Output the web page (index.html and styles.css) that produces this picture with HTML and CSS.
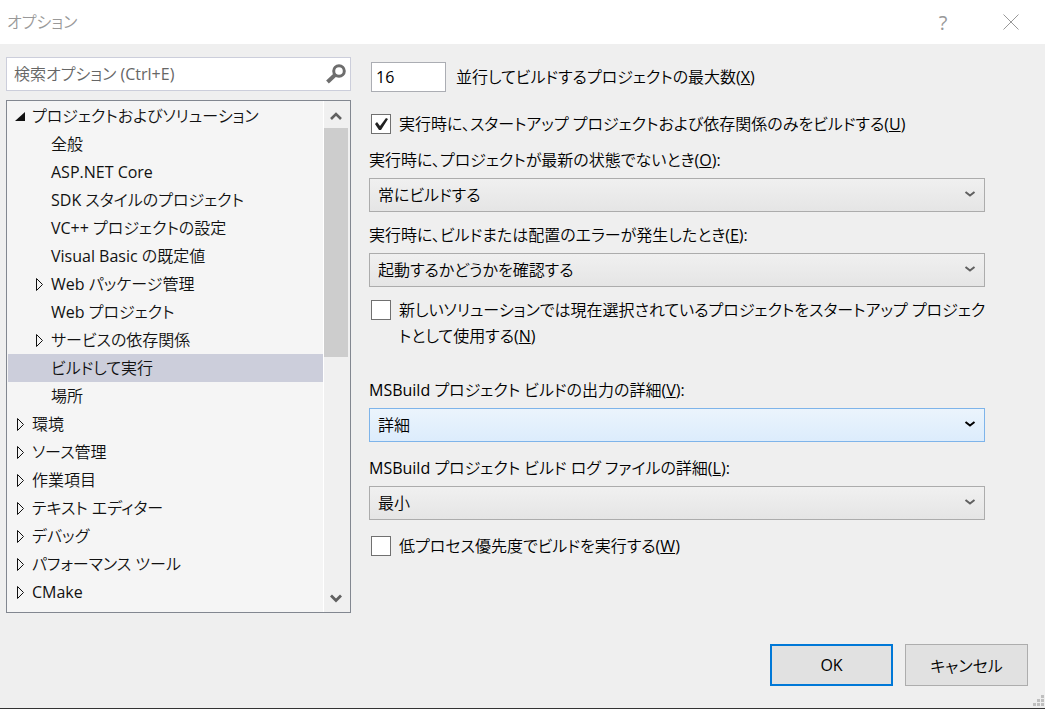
FILE: index.html
```html
<!DOCTYPE html>
<html lang="ja">
<head>
    <meta charset="UTF-8">
    <meta name="viewport" content="width=device-width, initial-scale=1.0">
    <title>オプション</title>
    <link rel="stylesheet" href="styles.css">
</head>
<body>

    <!-- Arrow shapes used by the tree and the drop-downs -->
    <svg class="symbols" width="0" height="0">
        <symbol id="closed" viewBox="0 0 9 15">
            <path d="M1.5 1.5 L7.5 7.5 L1.5 13.5 Z" fill="none" stroke="currentColor"/>
        </symbol>
        <symbol id="chevron" viewBox="0 0 12 8">
            <path d="M1.5 2 L6 5.5 L10.5 2" fill="none" stroke="currentColor" stroke-width="2"/>
        </symbol>
    </svg>

    <header class="title-bar">
        <h1>オプション</h1>
        <div class="window-buttons">
            <button type="button" class="help" aria-label="ヘルプ">?</button>
            <button type="button" aria-label="閉じる">
                <svg width="16" height="16" viewBox="0 0 16 16"><path d="M0.5 0.5 L15.5 15.5 M15.5 0.5 L0.5 15.5" stroke="currentColor"/></svg>
            </button>
        </div>
    </header>

    <main class="content">

        <!-- Search and category tree -->
        <div class="sidebar">
            <div class="search">
                <input type="search" placeholder="検索オプション (Ctrl+E)" aria-label="検索オプション">
                <svg width="20" height="20" viewBox="0 0 20 20" fill="none" stroke="#6d6d6d">
                    <circle cx="13" cy="7" r="5.3" stroke-width="3"/>
                    <path d="M9 11 L1.5 18" stroke-width="4"/>
                </svg>
            </div>

            <div class="tree-box">
                <ul class="tree">
                    <li><span class="row"><svg class="arrow" width="9" height="11" viewBox="0 0 9 11"><path d="M9 1 V10 H-1 Z" fill="currentColor"/></svg>プロジェクトおよびソリューション</span>
                        <ul>
                            <li><span class="row">全般</span></li>
                            <li><span class="row">ASP.NET Core</span></li>
                            <li><span class="row">SDK スタイルのプロジェクト</span></li>
                            <li><span class="row">VC++ プロジェクトの設定</span></li>
                            <li><span class="row">Visual Basic の既定値</span></li>
                            <li><span class="row"><svg class="arrow" width="9" height="15"><use href="#closed"/></svg>Web パッケージ管理</span></li>
                            <li><span class="row">Web プロジェクト</span></li>
                            <li><span class="row"><svg class="arrow" width="9" height="15"><use href="#closed"/></svg>サービスの依存関係</span></li>
                            <li><span class="row selected">ビルドして実行</span></li>
                            <li><span class="row">場所</span></li>
                        </ul>
                    </li>
                    <li><span class="row"><svg class="arrow" width="9" height="15"><use href="#closed"/></svg>環境</span></li>
                    <li><span class="row"><svg class="arrow" width="9" height="15"><use href="#closed"/></svg>ソース管理</span></li>
                    <li><span class="row"><svg class="arrow" width="9" height="15"><use href="#closed"/></svg>作業項目</span></li>
                    <li><span class="row"><svg class="arrow" width="9" height="15"><use href="#closed"/></svg>テキスト エディター</span></li>
                    <li><span class="row"><svg class="arrow" width="9" height="15"><use href="#closed"/></svg>デバッグ</span></li>
                    <li><span class="row"><svg class="arrow" width="9" height="15"><use href="#closed"/></svg>パフォーマンス ツール</span></li>
                    <li><span class="row"><svg class="arrow" width="9" height="15"><use href="#closed"/></svg>CMake</span></li>
                </ul>
                <div class="scrollbar">
                    <button type="button" aria-label="上へ">
                        <svg width="12" height="10" viewBox="0 0 12 10"><path d="M1 9 L6 4 L11 9" fill="none" stroke="currentColor" stroke-width="2.6"/></svg>
                    </button>
                    <div class="track"><div class="thumb"></div></div>
                    <button type="button" aria-label="下へ">
                        <svg width="12" height="10" viewBox="0 0 12 10"><path d="M1 1.5 L6 6.5 L11 1.5" fill="none" stroke="currentColor" stroke-width="2.8"/></svg>
                    </button>
                </div>
            </div>
        </div>

        <!-- Build and run settings -->
        <form class="settings">
            <div class="number">
                <input type="text" id="max-builds" value="16">
                <label for="max-builds">並行してビルドするプロジェクトの最大数(<u>X</u>)</label>
            </div>

            <div class="group">
                <div class="check">
                    <input type="checkbox" id="only-startup" checked>
                    <label for="only-startup">実行時に、スタートアップ プロジェクトおよび依存関係のみをビルドする(<u>U</u>)</label>
                </div>
                <div class="field">
                    <label for="out-of-date">実行時に、プロジェクトが最新の状態でないとき(<u>O</u>):</label>
                    <div class="select">
                        <select id="out-of-date"><option>常にビルドする</option></select>
                        <svg width="12" height="8"><use href="#chevron"/></svg>
                    </div>
                </div>
                <div class="field">
                    <label for="on-error">実行時に、ビルドまたは配置のエラーが発生したとき(<u>E</u>):</label>
                    <div class="select">
                        <select id="on-error"><option>起動するかどうかを確認する</option></select>
                        <svg width="12" height="8"><use href="#chevron"/></svg>
                    </div>
                </div>
                <div class="check">
                    <input type="checkbox" id="new-solution">
                    <label for="new-solution">新しいソリューションでは現在選択されているプロジェクトをスタートアップ プロジェク<br>トとして使用する(<u>N</u>)</label>
                </div>
            </div>

            <div class="group msbuild">
                <div class="field">
                    <label for="output">MSBuild プロジェクト ビルドの出力の詳細(<u>V</u>):</label>
                    <div class="select active">
                        <select id="output"><option>詳細</option></select>
                        <svg width="12" height="8"><use href="#chevron"/></svg>
                    </div>
                </div>
                <div class="field">
                    <label for="log-file">MSBuild プロジェクト ビルド ログ ファイルの詳細(<u>L</u>):</label>
                    <div class="select">
                        <select id="log-file"><option>最小</option></select>
                        <svg width="12" height="8"><use href="#chevron"/></svg>
                    </div>
                </div>
                <div class="check">
                    <input type="checkbox" id="low-priority">
                    <label for="low-priority">低プロセス優先度でビルドを実行する(<u>W</u>)</label>
                </div>
            </div>
        </form>
    </main>

    <footer class="buttons">
        <button type="button" class="default">OK</button>
        <button type="button">キャンセル</button>
        <svg class="grip" width="11" height="11" viewBox="0 0 11 11" fill="#bfbfbf">
            <path d="M8 0h3v3h-3z M4 4h3v3h-3z M8 4h3v3h-3z M0 8h3v3h-3z M4 8h3v3h-3z M8 8h3v3h-3z"/>
        </svg>
    </footer>

</body>
</html>
```
FILE: styles.css
```css
* {
    margin: 0;
    padding: 0;
    box-sizing: border-box;
}

body, button, input, select {
    font-family: "Open Sans", "Noto Sans CJK JP DemiLight", "Noto Sans CJK JP Light", "Noto Sans CJK JP", sans-serif;
    font-size: 16px;
    font-feature-settings: "palt";
    color: #000;
}

body {
    display: flex;
    flex-direction: column;
    min-height: 100vh;
    line-height: 26px;
    background-color: #efefef;
    border-bottom: 1px solid #333;
}

.symbols {
    position: absolute;
}

/* Title bar */
.title-bar {
    display: flex;
    justify-content: space-between;
    align-items: center;
    height: 44px;
    padding-left: 7px;
    background-color: white;
    color: #999;
}

.title-bar h1 {
    font-size: 16px;
    font-weight: normal;
}

.window-buttons {
    display: flex;
}

.window-buttons button {
    display: flex;
    justify-content: center;
    align-items: center;
    width: 68px;
    height: 44px;
    border: none;
    background: none;
    color: #999;
}

.window-buttons .help {
    font-size: 20px;
}

/* Main area */
.content {
    display: grid;
    grid-template-columns: 345px 1fr;
    gap: 18px;
    flex: 1;
    align-items: start;
    padding: 13px 61px 0 6px;
}

/* Search box */
.search {
    display: flex;
    align-items: center;
    height: 34px;
    padding: 0 4px 0 7px;
    background-color: white;
    border: 1px solid #cccedb;
}

.search input {
    flex: 1;
    min-width: 0;
    border: none;
    outline: none;
    background: none;
}

.search input::placeholder {
    color: #666;
}

/* Category tree */
.tree-box {
    display: flex;
    margin-top: 9px;
    background-color: #f5f5f5;
    border: 1px solid #828790;
    color: #111;
}

.tree {
    flex: 1;
    padding: 1px 0 6px 1px;
}

.tree, .tree ul {
    list-style: none;
}

.row {
    display: flex;
    align-items: center;
    position: relative;
    height: 28px;
    padding-left: 24px;
}

.tree ul .row {
    padding-left: 43px;
}

.arrow {
    position: absolute;
    left: 8px;
    overflow: visible;
}

.tree ul .arrow {
    left: 27px;
}

.selected {
    background-color: #cccedb;
}

/* Scrollbar */
.scrollbar {
    display: flex;
    flex-direction: column;
    width: 27px;
    padding-right: 2px;
    background-color: #f0f0f0;
    border-left: 1px solid white;
}

.scrollbar button {
    display: flex;
    justify-content: center;
    align-items: center;
    height: 27px;
    border: none;
    background: none;
    color: #606060;
}

.track {
    flex: 1;
}

.thumb {
    height: 50%;
    background-color: #cdcdcd;
}

/* Settings */
.number {
    display: flex;
    align-items: center;
    gap: 10px;
    padding: 5px 0 0 2px;
}

.number input {
    width: 75px;
    height: 30px;
    padding-left: 4px;
    border: 1px solid #abadb3;
    background-color: white;
}

.group {
    display: flex;
    flex-direction: column;
    gap: 10px;
    margin-top: 19px;
}

.msbuild {
    gap: 13px;
    margin-top: 28px;
}

.check {
    display: flex;
    align-items: flex-start;
    gap: 8px;
    padding-left: 2px;
}

.check label {
    white-space: nowrap;
}

.check input {
    appearance: none;
    flex: none;
    width: 20px;
    height: 20px;
    margin-top: 3px;
    border: 1px solid #707070;
    background-color: white;
}

.check input:checked::before {
    content: "";
    display: block;
    width: 18px;
    height: 18px;
    background-color: #212121;
    clip-path: polygon(3px 9px, 5px 7px, 8px 11px, 14px 3px, 16px 4px, 9px 15px, 7px 15px);
}

.field label {
    display: block;
    margin-bottom: 5px;
}

.select {
    position: relative;
    color: #606060;
}

.select select {
    appearance: none;
    display: block;
    width: 100%;
    height: 34px;
    padding-left: 8px;
    border: 1px solid #acacac;
    border-radius: 0;
    background: linear-gradient(#f0f0f0, #e5e5e5);
}

.select svg {
    position: absolute;
    top: 12px;
    right: 9px;
    pointer-events: none;
}

.active {
    color: #000;
}

.active select {
    border-color: #7eb4ea;
    background: linear-gradient(#ebf4fc, #dcecfc);
}

/* Dialog buttons */
.buttons {
    display: flex;
    justify-content: flex-end;
    gap: 12px;
    position: relative;
    padding: 0 17px 22px 0;
}

.buttons button {
    width: 123px;
    height: 42px;
    border: 1px solid #adadad;
    background-color: #e1e1e1;
}

.buttons .default {
    border: 2px solid #0078d7;
}

.grip {
    position: absolute;
    right: 1px;
    bottom: 2px;
}
```
